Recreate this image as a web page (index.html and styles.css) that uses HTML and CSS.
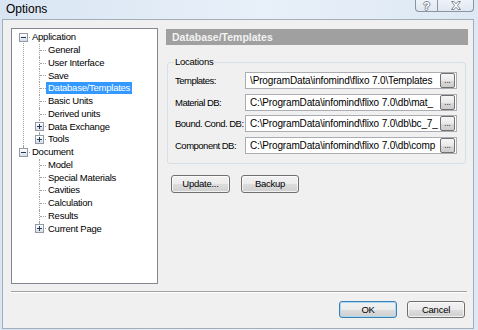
FILE: index.html
```html
<!DOCTYPE html>
<html lang="en">
<head>
    <meta charset="UTF-8">
    <title>Options</title>
    <link rel="stylesheet" href="styles.css">
</head>
<body>
    <div class="window">
        <!-- Title bar -->
        <div class="titlebar">
            <span class="title">Options</span>
            <div class="caption-buttons">
                <span class="cap-btn cap-help">?</span>
                <span class="cap-btn cap-close">
                    <svg width="12" height="9" viewBox="0 0 12 9">
                        <path d="M1.5 0.5 H4 L6 2.8 L8 0.5 H10.5 L7.4 4.5 L10.5 8.5 H8 L6 6.2 L4 8.5 H1.5 L4.6 4.5 Z" fill="#ffffff" stroke="#7d8794" stroke-width="1"/>
                    </svg>
                </span>
            </div>
        </div>

        <div class="client">
            <div class="main">
                <!-- Navigation tree -->
                <div class="tree">
                    <ul>
                        <li class="node">
                            <div class="row"><span class="twisty"><span class="box"></span></span><span class="label">Application</span></div>
                            <ul>
                                <li class="node"><div class="row"><span class="twisty"></span><span class="label">General</span></div></li>
                                <li class="node"><div class="row"><span class="twisty"></span><span class="label">User Interface</span></div></li>
                                <li class="node"><div class="row"><span class="twisty"></span><span class="label">Save</span></div></li>
                                <li class="node"><div class="row"><span class="twisty"></span><span class="label selected">Database/Templates</span></div></li>
                                <li class="node"><div class="row"><span class="twisty"></span><span class="label">Basic Units</span></div></li>
                                <li class="node"><div class="row"><span class="twisty"></span><span class="label">Derived units</span></div></li>
                                <li class="node"><div class="row"><span class="twisty"><span class="box plus"></span></span><span class="label">Data Exchange</span></div></li>
                                <li class="node"><div class="row"><span class="twisty"><span class="box plus"></span></span><span class="label">Tools</span></div></li>
                            </ul>
                        </li>
                        <li class="node">
                            <div class="row"><span class="twisty"><span class="box"></span></span><span class="label">Document</span></div>
                            <ul>
                                <li class="node"><div class="row"><span class="twisty"></span><span class="label">Model</span></div></li>
                                <li class="node"><div class="row"><span class="twisty"></span><span class="label">Special Materials</span></div></li>
                                <li class="node"><div class="row"><span class="twisty"></span><span class="label">Cavities</span></div></li>
                                <li class="node"><div class="row"><span class="twisty"></span><span class="label">Calculation</span></div></li>
                                <li class="node"><div class="row"><span class="twisty"></span><span class="label">Results</span></div></li>
                                <li class="node"><div class="row"><span class="twisty"><span class="box plus"></span></span><span class="label">Current Page</span></div></li>
                            </ul>
                        </li>
                    </ul>
                </div>

                <!-- Settings page -->
                <div class="page">
                    <div class="page-header">Database/Templates</div>

                    <div class="group">
                        <span class="group-title">Locations</span>
                        <div class="field-row">
                            <span class="field-label">Templates:</span>
                            <div class="path-box"><span class="path-text">\ProgramData\infomind\flixo 7.0\Templates</span><span class="browse">...</span></div>
                        </div>
                        <div class="field-row">
                            <span class="field-label">Material DB:</span>
                            <div class="path-box"><span class="path-text">C:\ProgramData\infomind\flixo 7.0\db\mat_</span><span class="browse">...</span></div>
                        </div>
                        <div class="field-row">
                            <span class="field-label">Bound. Cond. DB:</span>
                            <div class="path-box"><span class="path-text">C:\ProgramData\infomind\flixo 7.0\db\bc_7_</span><span class="browse">...</span></div>
                        </div>
                        <div class="field-row">
                            <span class="field-label">Component DB:</span>
                            <div class="path-box"><span class="path-text">C:\ProgramData\infomind\flixo 7.0\db\comp</span><span class="browse">...</span></div>
                        </div>
                    </div>

                    <div class="page-actions">
                        <button class="btn btn-update">Update...</button>
                        <button class="btn btn-backup">Backup</button>
                    </div>
                </div>
            </div>

            <div class="separator"></div>

            <div class="dialog-buttons">
                <button class="btn btn-default">OK</button>
                <button class="btn">Cancel</button>
            </div>
        </div>
    </div>
</body>
</html>
```

FILE: styles.css
```css
/* Basic reset */
* {
    margin: 0;
    padding: 0;
    box-sizing: border-box;
}

body {
    width: 478px;
    height: 330px;
    overflow: hidden;
    background: linear-gradient(to right, #d9e5f3, #e8f0f9 55%, #dde8f4);
    font-family: "Liberation Sans", Arial, sans-serif;
    color: #000;
}

.window {
    height: 330px;
    display: flex;
    flex-direction: column;
}

/* Title bar */
.titlebar {
    height: 19px;
    display: flex;
    justify-content: space-between;
    align-items: flex-start;
    padding: 0 4px 0 6px;
}

.title {
    font-size: 12px;
    line-height: 14px;
    padding-top: 2px;
    color: #000;
}

.caption-buttons {
    display: flex;
    height: 12px;
    border: 1px solid #8a939f;
    border-top: none;
    border-radius: 0 0 4px 4px;
    background: linear-gradient(#eef3f9, #dfe7f1);
    overflow: hidden;
}

.cap-btn {
    display: flex;
    align-items: center;
    justify-content: center;
    height: 11px;
}

.cap-help {
    width: 22px;
    border-right: 1px solid #8a939f;
    font-size: 11px;
    font-weight: bold;
    color: #fff;
    text-shadow: 1px 0 0 #7d8794, -1px 0 0 #7d8794, 0 1px 0 #7d8794, 0 -1px 0 #7d8794;
}

.cap-close {
    width: 35px;
}

/* Client area */
.client {
    flex: 1;
    margin: 0 4px 1px 2px;
    border: 1px solid #a3aebb;
    background-color: #f0f0f0;
    padding: 8px 0 0 8px;
    font-size: 9.5px;
    letter-spacing: -0.25px;
}

.main {
    display: flex;
    gap: 8px;
}

/* Tree */
.tree {
    width: 147px;
    height: 256px;
    border: 1px solid #828790;
    background-color: #fff;
    overflow: hidden;
}

.tree ul {
    list-style: none;
}

.tree > ul {
    padding: 2px 0 0 4px;
}

.node ul {
    padding-left: 16px;
}

.node {
    position: relative;
}

/* vertical connector between siblings */
.node::before {
    content: "";
    position: absolute;
    left: 7px;
    top: 0;
    bottom: 0;
    border-left: 1px dotted #a0a0a0;
}

.tree > ul > .node:first-child::before {
    top: 6px;
}

.node:last-child::before {
    bottom: auto;
    height: 6px;
}

.row {
    display: flex;
    align-items: center;
    height: 12.75px;
    line-height: 12px;
    white-space: nowrap;
}

.twisty {
    position: relative;
    width: 16px;
    height: 100%;
    display: flex;
    align-items: center;
    flex: none;
}

/* horizontal tick */
.twisty::after {
    content: "";
    position: absolute;
    left: 8px;
    width: 6px;
    top: 6px;
    border-top: 1px dotted #a0a0a0;
}

.box {
    position: relative;
    z-index: 1;
    width: 9px;
    height: 9px;
    margin-left: 3px;
    border: 1px solid #949aa5;
    background: linear-gradient(#ffffff, #d8dde4);
}

.box::before {
    content: "";
    position: absolute;
    left: 1px;
    right: 1px;
    top: 3px;
    height: 1px;
    background-color: #1f3a5c;
}

.box.plus::after {
    content: "";
    position: absolute;
    top: 1px;
    bottom: 1px;
    left: 3px;
    width: 1px;
    background-color: #1f3a5c;
}

.label {
    margin-left: -2px;
    padding: 0 2px;
}

.label.selected {
    background-color: #3399ff;
    color: #fff;
}

/* Settings page */
.page {
    width: 302px;
}

.page-header {
    margin-top: 1px;
    height: 16px;
    padding-left: 6px;
    background-color: #a0a0a0;
    color: #f2f2f2;
    font-size: 10.5px;
    font-weight: bold;
    letter-spacing: 0;
    line-height: 16px;
}

.group {
    margin: 17px 2px 0 1px;
    border: 1px solid #d5dfe5;
    border-radius: 3px;
    padding: 0 7px 9px 7px;
    display: flex;
    flex-direction: column;
    gap: 4.5px;
}

.group-title {
    align-self: flex-start;
    margin: -7px 0 -0.5px -1px;
    padding: 0 1px;
    height: 12px;
    line-height: 12px;
    background-color: #f0f0f0;
}

.field-row {
    display: flex;
    align-items: center;
}

.field-label {
    width: 70px;
    flex: none;
    white-space: nowrap;
    letter-spacing: -0.5px;
}

.path-box {
    width: 212px;
    height: 17px;
    display: flex;
    align-items: center;
    border: 1px solid #abadb3;
    background-color: #fff;
    padding: 0 1px 0 4px;
}

.path-text {
    flex: 1;
    overflow: hidden;
    white-space: nowrap;
    font-size: 10px;
    letter-spacing: -0.15px;
}

.browse {
    flex: none;
    width: 15px;
    height: 15px;
    border: 1px solid #707070;
    border-radius: 2px;
    background: linear-gradient(#f6f6f6, #e9e9e9 50%, #dadada 51%, #cdcdcd);
    font-size: 8px;
    line-height: 14px;
    text-align: center;
    letter-spacing: 0;
}

.page-actions {
    display: flex;
    gap: 11px;
    margin: 11px 0 0 5px;
}

/* Buttons */
.btn {
    height: 18px;
    border: 1px solid #707070;
    border-radius: 3px;
    background: linear-gradient(#f2f2f2, #ebebeb 50%, #dddddd 51%, #cfcfcf);
    box-shadow: inset 0 0 0 1px rgba(255, 255, 255, 0.7);
    font-family: inherit;
    font-size: 9.5px;
    letter-spacing: -0.25px;
    color: #000;
    width: 58px;
}

.btn-update {
    width: 59px;
}

.btn-default {
    border-color: #3c7fb1;
    box-shadow: inset 0 0 0 1px #a8d8f5;
}

.separator {
    width: 456px;
    margin-top: 7px;
    border-top: 1px solid #a0a0a0;
    border-bottom: 1px solid #ffffff;
}

.dialog-buttons {
    display: flex;
    justify-content: flex-end;
    gap: 10px;
    margin: 8px 8px 0 0;
}

.dialog-buttons .btn {
    height: 17px;
}
```
